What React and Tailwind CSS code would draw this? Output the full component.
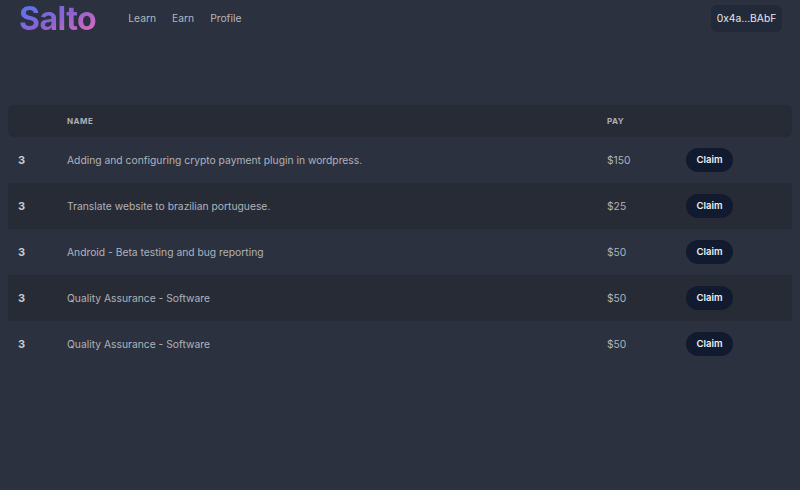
const tasks = [
  { id: 1, name: "Adding and configuring crypto payment plugin in wordpress.", pay: "$150" },
  { id: 2, name: "Translate website to brazilian portuguese.", pay: "$25" },
  { id: 3, name: "Android - Beta testing and bug reporting", pay: "$50" },
  { id: 4, name: "Quality Assurance - Software", pay: "$50" },
  { id: 5, name: "Quality Assurance - Software", pay: "$50" },
];

export default function App() {
  return (
    <div className="min-h-screen bg-[#2b313e] font-['Inter',sans-serif] text-gray-300">
      {/* Navbar */}
      <nav className="flex items-start justify-between h-[38px] pl-[19px] pr-[18px]">
        <div className="flex items-start">
          <div className="text-[32px] leading-[38px] font-bold tracking-[-0.5px] text-transparent bg-clip-text bg-gradient-to-br from-[#3f78f5] via-[#8a62d2] to-[#f565b8]">
            Salto
          </div>
          <ul className="flex gap-[16px] ml-[32px] mt-[11px] text-[10.3px] leading-[14px] text-[#b4b6bd]">
            <li>Learn</li>
            <li>Earn</li>
            <li>Profile</li>
          </ul>
        </div>
        <button className="h-[27px] w-[71px] mt-[5px] rounded-md bg-[#222938] text-[10.3px] text-[#e6e8ec]">
          0x4a...BAbF
        </button>
      </nav>

      {/* Tasks */}
      <div className="px-[8px] pt-[67px]">
        <table className="w-full table-fixed border-collapse">
          <thead>
            <tr className="h-[32px] bg-[#272b36] text-left text-[8px] tracking-[0.5px] text-[#adb0b8]">
              <th className="w-[59px] rounded-l-md"></th>
              <th className="w-[540px] font-bold">NAME</th>
              <th className="w-[79px] font-bold">PAY</th>
              <th className="rounded-r-md"></th>
            </tr>
          </thead>
          <tbody>
            {tasks.map((t, i) => (
              <tr key={t.id} className={i % 2 === 1 ? "h-[46px] bg-[#272b36]" : "h-[46px]"}>
                <td className="pl-[10px] text-[11px] font-bold text-[#c8cad0]">3</td>
                <td className="pt-[1px] text-[10.3px] text-[#b0b3ba]">{t.name}</td>
                <td className="pt-[1px] text-[10.3px] text-[#b0b3ba]">{t.pay}</td>
                <td>
                  <button className="block h-[24px] w-[47px] rounded-full bg-[#111a2e] text-[9.5px] font-semibold text-[#eef0f3]">
                    Claim
                  </button>
                </td>
              </tr>
            ))}
          </tbody>
        </table>
      </div>
    </div>
  );
}
